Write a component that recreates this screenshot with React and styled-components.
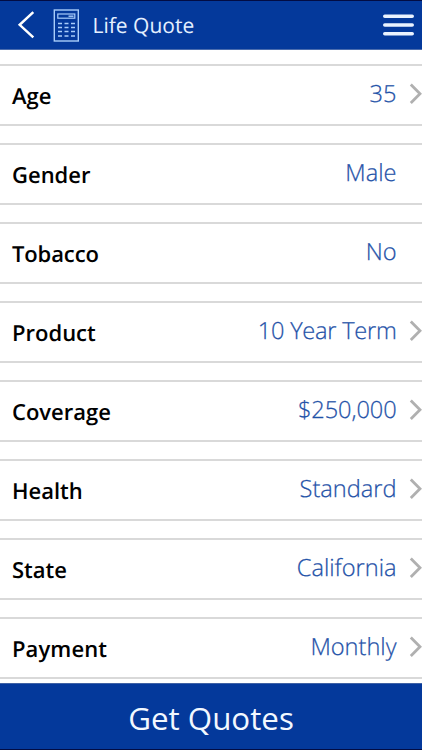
import React from 'react';
import styled, { createGlobalStyle } from 'styled-components';

const GlobalStyle = createGlobalStyle`
	* {
		box-sizing: border-box;
	}

	body {
		margin: 0;
		background: #fff;
		font-family: "Open Sans", "Noto Sans", sans-serif;
		font-kerning: normal;
		text-rendering: geometricPrecision;
	}
`

const Screen = styled.div`
	display: flex;
	flex-direction: column;
	width: 422px;
	height: 750px;
	overflow: hidden;
	background: #fff;
`

const Header = styled.header`
	display: flex;
	flex: none;
	align-items: center;
	height: 50px;
	padding: 0 8px 0 17px;
	background: #04399b;
	border-top: 1px solid #020c44;
	border-bottom: 1px solid #4a6cae;
`

const IconButton = styled.button`
	display: flex;
	padding: 0;
	border: 0;
	background: none;
`

const Title = styled.h1`
	flex: 1;
	margin: 0 0 0 13.5px;
	padding-top: 2px;
	color: #e4f0ff;
	font-size: 21px;
	font-weight: 400;
	line-height: 30px;
`

const CalculatorIcon = styled.svg`
	margin-left: 18px;
`

const List = styled.main`
	display: flex;
	flex: 1;
	flex-direction: column;
	gap: 17px;
	min-height: 0;
	padding-top: 14px;
	overflow: hidden;
`

const Row = styled.div`
	display: flex;
	flex: none;
	height: 62px;
	padding-left: 12px;
	border-top: 2px solid #d9d9d9;
	border-bottom: 2px solid #d9d9d9;
`

const Label = styled.span`
	flex: 1;
	color: #000;
	font-size: 22px;
	font-weight: 600;
	line-height: 60px;
	letter-spacing: ${props => props.$spacing || 0}px;
`

const Value = styled.span`
	color: #1f52a8;
	font-size: 23.6px;
	font-weight: 300;
	line-height: 54px;
	letter-spacing: ${props => props.$spacing || 0}px;
	-webkit-text-stroke: 0.25px #1f52a8;
`

const Arrow = styled.span`
	display: flex;
	width: 25.5px;
	padding: 17px 0 0 12.5px;
`

const QuoteButton = styled.button`
	flex: none;
	height: 67px;
	padding: 3px 0 0;
	border: 0;
	border-top: 1px solid #3f62a5;
	border-bottom: 1px solid #020c44;
	background: #04399b;
	color: #f2f8ff;
	font-family: inherit;
	font-size: 31.3px;
	font-weight: 400;
	line-height: 62px;
`

const fields = [
	{ label: 'Age', value: '35', arrow: true },
	{ label: 'Gender', value: 'Male' },
	{ label: 'Tobacco', value: 'No', labelSpacing: -0.12 },
	{ label: 'Product', value: '10 Year Term', spacing: -0.25, arrow: true },
	{ label: 'Coverage', value: '$250,000', spacing: -0.1, arrow: true },
	{ label: 'Health', value: 'Standard', arrow: true },
	{ label: 'State', value: 'California', arrow: true },
	{ label: 'Payment', value: 'Monthly', labelSpacing: 0.1, arrow: true }
];

const Calculator = () => (
	<CalculatorIcon width="26" height="33" viewBox="0 0 26 33" fill="none" stroke="#a9cdfa">
		<rect x="1.3" y="1" width="24" height="31" strokeWidth="1.4" />
		<rect x="4.8" y="5" width="17" height="4.2" strokeWidth="1.2" />
		<path d="M15.5 7.2h5" strokeWidth="1.4" />
		<path
			d="M5 14.5h4M11.5 14.5h4M18 14.5h4M5 18.5h4M11.5 18.5h4M18 18.5h4M5 22.5h4M11.5 22.5h4M18 22.5h4M5 27h4M11.5 27h4M18 27h4"
			strokeWidth="1.5"
		/>
	</CalculatorIcon>
)

const App = () => (
	<>
		<GlobalStyle />
		<Screen>
			<Header>
				<IconButton aria-label="Back">
					<svg width="18" height="28" viewBox="0 0 18 28" fill="none" stroke="#fff" strokeWidth="2.5">
						<path d="M16.3 1.2L2.7 13.8L16.3 26.4" />
					</svg>
				</IconButton>
				<Calculator />
				<Title>Life Quote</Title>
				<IconButton aria-label="Menu">
					<svg width="31" height="22" viewBox="0 0 31 22" stroke="#eaf3ff" strokeWidth="3.6" strokeLinecap="round">
						<path d="M1.8 2.2h27.4M1.8 11h27.4M1.8 19.8h27.4" />
					</svg>
				</IconButton>
			</Header>
			<List>
				{fields.map(field => (
					<Row key={field.label}>
						<Label $spacing={field.labelSpacing}>{field.label}</Label>
						<Value $spacing={field.spacing}>{field.value}</Value>
						<Arrow>
							{field.arrow && (
								<svg width="13" height="22" viewBox="0 0 13 22" fill="none" stroke="#b0b0b0" strokeWidth="2.8">
									<path d="M1.8 1.5L11 10.8L1.8 20.1" />
								</svg>
							)}
						</Arrow>
					</Row>
				))}
			</List>
			<QuoteButton>Get Quotes</QuoteButton>
		</Screen>
	</>
)

export default App;
